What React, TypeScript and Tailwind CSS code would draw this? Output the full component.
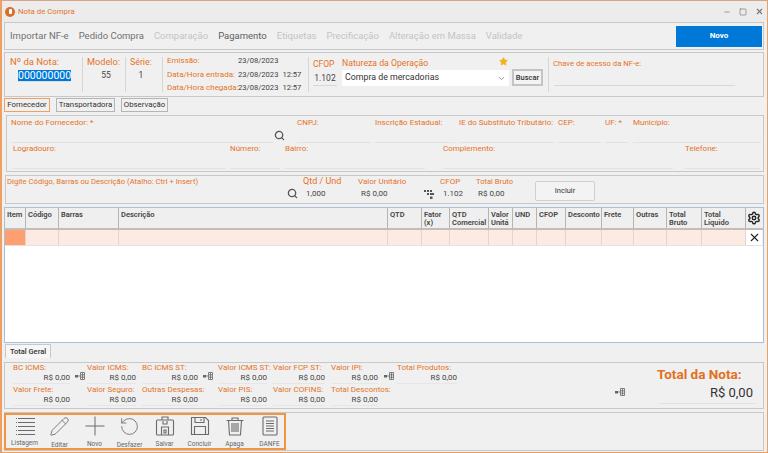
import React from "react";
import { Search, Star, X, Settings, ChevronDown, Minus, Square, Pencil, RotateCcw } from "lucide-react";

const L = "text-[#e67326]";

function Net({ className = "" }: { className?: string }) {
  return (
    <svg viewBox="0 0 10 10" className={"w-[10px] h-[10px] shrink-0 " + className} fill="none" stroke="#666" strokeWidth="1">
      <rect x="0" y="4" width="3" height="2.5" fill="#666" stroke="none" />
      <path d="M3 5h2M5.5 1.5h4v7h-4zM5.5 3.8h4M5.5 6.2h4M7.5 1.5v7" strokeWidth="0.8" />
    </svg>
  );
}

function Dots() {
  return (
    <svg viewBox="0 0 10 10" className="w-[10px] h-[10px] shrink-0" fill="#555">
      <rect x="0" y="1" width="2" height="2" /><rect x="3" y="1" width="2" height="2" /><rect x="6" y="1" width="2" height="2" />
      <rect x="6" y="4" width="2" height="2" /><rect x="8" y="4" width="2" height="2" /><rect x="3" y="4" width="2" height="2" />
      <rect x="6" y="7.5" width="2.5" height="2.5" />
    </svg>
  );
}

function VLine({ className = "" }: { className?: string }) {
  return <div className={"w-px bg-[#d6d6d6] shrink-0 " + className} />;
}

function Field({ label, w, className = "" }: { label: string; w: string; className?: string }) {
  return (
    <div className={w + " shrink-0 flex flex-col h-[26px] " + className}>
      <span className={L + " leading-[12px] whitespace-nowrap"}>{label}</span>
      <div className="mt-auto h-px bg-[#e2e2e2]" />
    </div>
  );
}

function Amount({ label, value = "R$ 0,00", w, ml }: { label: string; value?: string; w: string; ml: string }) {
  return (
    <div className={w + " " + ml + " shrink-0 flex flex-col h-[21px]"}>
      <span className={L + " leading-[10px] whitespace-nowrap"}>{label}</span>
      <span className="leading-[10px] text-right text-[#444] whitespace-nowrap">{value}</span>
      <div className="h-px bg-[#e6e6e6]" />
    </div>
  );
}

function Tool({ label, children }: { label: string; children: React.ReactNode }) {
  return (
    <div className="w-[35px] shrink-0 flex flex-col items-center">
      <div className="h-[22px] flex items-center justify-center text-[#6b6b6b]">{children}</div>
      <span className="mt-[4px] leading-[9px] text-[6.5px] text-[#666] whitespace-nowrap">{label}</span>
    </div>
  );
}

const headers: string[][] = [
  ["Item"], ["Código"], ["Barras"], ["Descrição"], ["QTD"], ["Fator", "(x)"], ["QTD", "Comercial"], ["Valor", "Unitá"],
  ["UND"], ["CFOP"], ["Desconto"], ["Frete"], ["Outras"], ["Total", "Bruto"], ["Total", "Líquido"],
];
const cols = "grid grid-cols-[21px_33px_60px_269px_34px_28px_39px_24px_24px_29px_36px_32px_33px_35px_44px_16px]";

export default function App() {
  return (
    <div
      className="w-[768px] h-[453px] overflow-hidden bg-[#f0f0f0] border border-l-2 border-[#ee9f62] border-t-[#d9a584] flex flex-col text-[8px] text-[#444]"
      style={{ fontFamily: 'Roboto, "Noto Sans", sans-serif' }}
    >
      {/* title */}
      <div className="h-[21px] shrink-0 flex items-center pl-[3px] pr-[3px] bg-[#ececec]">
        <div className="w-[10px] h-[10px] rounded-full bg-[#d9702a] flex items-center justify-center">
          <div className="w-[3px] h-[5px] bg-white rounded-[1px]" />
        </div>
        <span className={L + " ml-[3px] text-[7.8px]"}>Nota de Compra</span>
        <div className="ml-auto flex items-center gap-[8px] text-[#777]">
          <Minus size={8} />
          <Square size={8} />
          <X size={9} strokeWidth={3} />
        </div>
      </div>

      {/* tabs */}
      <div className="ml-[2px] mr-[3px] h-[28px] shrink-0 border border-[#c8c8c8] flex items-center pl-[5px] pr-[1px] text-[9.5px] gap-[10px] whitespace-nowrap">
        <span className="text-[#707070]">Importar NF-e</span>
        <span className="text-[#707070]">Pedido Compra</span>
        <span className="text-[#c4c4c4]">Comparação</span>
        <span className="text-[#606060]">Pagamento</span>
        <span className="text-[#c4c4c4]">Etiquetas</span>
        <span className="text-[#c4c4c4]">Precificação</span>
        <span className="text-[#c4c4c4]">Alteração em Massa</span>
        <span className="text-[#c4c4c4]">Validade</span>
        <button className="ml-auto w-[86px] h-[21px] bg-[#0078d7] text-white text-[8px] font-bold">Novo</button>
      </div>

      {/* header */}
      <div className="mt-[2px] ml-[2px] mr-[3px] h-[45px] shrink-0 border border-[#c8c8c8] flex pl-[5px]">
        <div className="w-[72px] shrink-0 pt-[2px]">
          <div className={L + " text-[9.5px] leading-[14px]"}>Nº da Nota:</div>
          <div className="mt-[1px] ml-[8px] w-[52px] border-b border-[#ddd] flex">
            <span className="bg-[#0078d7] text-white text-[10.5px] leading-[11px]">000000000</span>
          </div>
        </div>
        <VLine className="my-[4px]" />
        <div className="w-[42px] shrink-0 pl-[4px] pt-[2px]">
          <div className={L + " text-[9.2px] leading-[14px]"}>Modelo:</div>
          <div className="text-center text-[8.5px]">55</div>
        </div>
        <VLine className="my-[4px]" />
        <div className="w-[36px] shrink-0 pl-[4px] pt-[2px]">
          <div className={L + " text-[8.8px] leading-[14px]"}>Série:</div>
          <div className="w-[22px] text-center text-[8.5px]">1</div>
        </div>
        <VLine className="my-[4px]" />
        <div className="w-[145px] shrink-0 pl-[4px] pt-[1px] flex flex-col leading-[13.5px] whitespace-nowrap">
          <div className="flex"><span className={L + " w-[71px]"}>Emissão:</span><span className="text-[7.6px]">23/08/2023</span></div>
          <div className="flex"><span className={L + " w-[71px]"}>Data/Hora entrada:</span><span className="text-[7.6px]">23/08/2023</span><span className="ml-[4px] text-[7.6px]">12:57</span></div>
          <div className="flex"><span className={L + " w-[71px]"}>Data/Hora chegada:</span><span className="text-[7.6px]">23/08/2023</span><span className="ml-[4px] text-[7.6px]">12:57</span></div>
        </div>
        <VLine className="my-[4px]" />
        <div className="w-[33px] shrink-0 pl-[4px] pt-[5px]">
          <div className={L + " text-[8.5px] leading-[12px]"}>CFOP</div>
          <div className="mt-[1px] w-[24px] h-[15px] border-b border-[#d8d8d8] text-center text-[8.5px] leading-[14px]">1.102</div>
        </div>
        <div className="w-[172px] shrink-0 pt-[4px]">
          <div className="flex items-center h-[13px]">
            <span className={L + " text-[8.7px]"}>Natureza da Operação</span>
            <Star size={9} className="ml-auto mr-[6px] -mt-[5px] text-[#f2b21c]" fill="#f2b21c" />
          </div>
          <div className="h-[16px] w-[167px] bg-white flex items-center pl-[3px] pr-[3px] text-[8.8px] text-[#333]">
            Compra de mercadorias
            <ChevronDown size={9} className="ml-auto text-[#777]" />
          </div>
        </div>
        <button className="mt-[16px] w-[31px] h-[17px] border-2 border-[#c4c4c4] bg-[#f3f3f3] text-[7.5px] font-medium text-[#333] shrink-0 -ml-[2px]">Buscar</button>
        <VLine className="ml-[5px] my-[4px]" />
        <div className="ml-[4px] w-[182px] shrink-0 flex flex-col pt-[4px]">
          <span className={L + " text-[7.7px] leading-[14px]"}>Chave de acesso da NF-e:</span>
          <div className="mt-auto ml-[1px] mb-[10px] h-px bg-[#d8d8d8]" />
        </div>
      </div>

      {/* sub tabs */}
      <div className="mt-[1px] ml-[2px] h-[14px] shrink-0 flex text-[7.8px] text-[#333] whitespace-nowrap">
        <div className="w-[46px] border border-[#ee9f62] flex items-center justify-center">Fornecedor</div>
        <div className="ml-[6px] w-[59px] border border-[#b5b5b5] flex items-center justify-center">Transportadora</div>
        <div className="ml-[6px] w-[47px] border border-[#b5b5b5] flex items-center justify-center">Observação</div>
      </div>

      {/* fornecedor */}
      <div className="mt-[3px] ml-[4px] mr-[3px] h-[57px] shrink-0 border border-[#c8c8c8] pt-[1px] flex flex-col">
        <div className="flex pl-[4px]">
          <Field label="Nome do Fornecedor: *" w="w-[263px]" />
          <div className="w-[23px] shrink-0 flex items-end pb-[2px]"><Search size={11} className="text-[#555]" strokeWidth={2.8} /></div>
          <Field label="CNPJ:" w="w-[74px]" />
          <Field label="Inscrição Estadual:" w="w-[80px]" className="ml-[4px]" />
          <Field label="IE do Substituto Tributário:" w="w-[95px]" className="ml-[4px]" />
          <Field label="CEP:" w="w-[43px]" className="ml-[4px]" />
          <Field label="UF: *" w="w-[23px]" className="ml-[4px]" />
          <Field label="Município:" w="w-[128px]" className="ml-[5px]" />
        </div>
        <div className="flex pl-[6px]">
          <Field label="Logradouro:" w="w-[212px]" />
          <Field label="Número:" w="w-[50px]" className="ml-[5px]" />
          <Field label="Bairro:" w="w-[140px]" className="ml-[5px]" />
          <Field label="Complemento:" w="w-[230px]" className="ml-[18px]" />
          <Field label="Telefone:" w="w-[75px]" className="ml-[12px]" />
        </div>
      </div>

      {/* product */}
      <div className="mt-[3px] ml-[3px] mr-[3px] h-[29px] shrink-0 border border-[#c8c8c8] flex pl-[1px]">
        <div className={L + " w-[280px] shrink-0 text-[7.7px] leading-[11px] whitespace-nowrap"}>Digite Código, Barras ou Descrição (Atalho: Ctrl + Insert)</div>
        <div className="w-[16px] shrink-0 pt-[12px]"><Search size={11} className="text-[#555]" strokeWidth={2.8} /></div>
        <div className="w-[55px] shrink-0">
          <div className={L + " text-[9px] leading-[11px]"}>Qtd / Und</div>
          <div className="leading-[14px] pl-[3px]">1,000</div>
        </div>
        <div className="w-[66px] shrink-0">
          <div className={L + " leading-[11px] whitespace-nowrap"}>Valor Unitário</div>
          <div className="leading-[14px] pl-[3px]">R$ 0,00</div>
        </div>
        <div className="w-[16px] shrink-0 pt-[13px]"><Dots /></div>
        <div className="w-[36px] shrink-0">
          <div className={L + " leading-[11px]"}>CFOP</div>
          <div className="leading-[14px] pl-[3px]">1.102</div>
        </div>
        <div className="w-[59px] shrink-0">
          <div className={L + " text-[7.6px] leading-[11px] whitespace-nowrap"}>Total Bruto</div>
          <div className="leading-[14px] pl-[2px]">R$ 0,00</div>
        </div>
        <button className="mt-[5px] w-[60px] h-[20px] border border-[#cfcfcf] rounded-[2px] bg-[#f3f3f3] text-[7.5px] text-[#333]">Incluir</button>
      </div>

      {/* table */}
      <div className="mt-[3px] ml-[2px] mr-[3px] h-[136px] shrink-0 border border-[#a9c0d8] bg-white flex flex-col text-[7.5px] font-semibold text-[#444]">
        <div className={cols + " h-[22px] bg-[#efefef] border-b-2 border-[#c4bcb8] leading-[8px]"}>
          {headers.map((h, i) => (
            <div key={i} className="border-r border-[#b5b5b5] pl-[2px] pt-[3px] whitespace-nowrap overflow-hidden">
              {h.map((t) => <div key={t}>{t}</div>)}
            </div>
          ))}
          <div className="flex items-center justify-center"><Settings size={14} className="text-[#222]" strokeWidth={2.4} /></div>
        </div>
        <div className={cols + " h-[16px] bg-[#fdeae2] border-b border-[#e8e0dc]"}>
          {headers.map((h, i) => (
            <div key={i} className={"border-r border-[#e3d4cc] " + (i === 0 ? "bg-[#ff9e6e]" : "")} />
          ))}
          <div className="bg-white flex items-center justify-center"><X size={13} className="text-[#222]" /></div>
        </div>
      </div>

      {/* total tab */}
      <div className="mt-[1px] ml-[3px] h-[14px] w-[46px] shrink-0 border border-[#c8c8c8] border-b-0 bg-[#f6f6f6] flex items-center justify-center text-[7.5px] font-medium text-[#333] whitespace-nowrap">Total Geral</div>

      {/* totals */}
      <div className="mt-[4px] ml-[2px] mr-[3px] h-[47px] shrink-0 border border-[#c8c8c8] flex">
        <div className="flex flex-col gap-[1px] w-[470px] shrink-0">
          <div className="flex">
            <Amount label="BC ICMS:" w="w-[57px]" ml="ml-[8px]" />
            <div className="w-[17px] shrink-0 pl-[5px] pt-[8px]"><Net /></div>
            <Amount label="Valor ICMS:" w="w-[49px]" ml="ml-[0px]" />
            <Amount label="BC ICMS ST:" w="w-[56px]" ml="ml-[6px]" />
            <div className="w-[20px] shrink-0 pl-[5px] pt-[8px]"><Net /></div>
            <Amount label="Valor ICMS ST:" w="w-[49px]" ml="ml-[0px]" />
            <Amount label="Valor FCP ST:" w="w-[52px]" ml="ml-[6px]" />
            <Amount label="Valor IPI:" w="w-[47px]" ml="ml-[6px]" />
            <div className="w-[19px] shrink-0 pl-[6px] pt-[8px]"><Net /></div>
            <Amount label="Total Produtos:" w="w-[60px]" ml="ml-[0px]" />
          </div>
          <div className="flex">
            <Amount label="Valor Frete:" w="w-[57px]" ml="ml-[8px]" />
            <Amount label="Valor Seguro:" w="w-[49px]" ml="ml-[17px]" />
            <Amount label="Outras Despesas:" w="w-[56px]" ml="ml-[6px]" />
            <Amount label="Valor PIS:" w="w-[49px]" ml="ml-[20px]" />
            <Amount label="Valor COFINS:" w="w-[52px]" ml="ml-[6px]" />
            <Amount label="Total Descontos:" w="w-[47px]" ml="ml-[6px]" />
          </div>
        </div>
        <div className="ml-[140px] pt-[24px] w-[44px] shrink-0"><Net /></div>
        <div className="w-[97px] shrink-0 flex flex-col pt-[2px]">
          <span className="ml-[-2px] text-[13.5px] leading-[18px] font-bold text-[#e2701f] whitespace-nowrap">Total da Nota:</span>
          <span className="text-[13px] leading-[20px] text-[#333] text-right pr-[3px]">R$ 0,00</span>
          <div className="h-px bg-[#e2e2e2]" />
        </div>
      </div>

      {/* toolbar */}
      <div className="mt-[3px] ml-[2px] mr-[3px] h-[39px] shrink-0 border border-[#c8c8c8] border-l-0 flex">
        <div className="w-[282px] h-full shrink-0 border-2 border-[#f5943f] flex pl-[1px] pt-[1px]">
          <Tool label="Listagem">
            <svg viewBox="0 0 20 18" className="w-[20px] h-[18px]" stroke="#6b6b6b" fill="none" strokeWidth="1">
              <path d="M3 1.5h17M1 1.5h1M3 5.5h17M1 5.5h1M3 9.5h17M1 9.5h1M3 13.5h17M1 13.5h1M3 17.5h17M1 17.5h1" />
            </svg>
          </Tool>
          <Tool label="Editar"><Pencil size={21} strokeWidth={1} /></Tool>
          <Tool label="Novo">
            <svg viewBox="0 0 20 20" className="w-[20px] h-[20px]" stroke="#6b6b6b" fill="none" strokeWidth="1">
              <path d="M10 0.5v19M0.5 10h19" />
            </svg>
          </Tool>
          <Tool label="Desfazer"><RotateCcw size={21} strokeWidth={1} /></Tool>
          <Tool label="Salvar">
            <svg viewBox="0 0 20 20" className="w-[20px] h-[20px]" stroke="#6b6b6b" fill="none" strokeWidth="1.1">
              <rect x="1.5" y="4" width="17" height="15" rx="1" />
              <path d="M7 4V1h6v3M6.5 19v-8h7v8M8 5v3h4V5" />
              <path d="M9 14h2v3H9z" />
            </svg>
          </Tool>
          <Tool label="Concluir">
            <svg viewBox="0 0 20 20" className="w-[20px] h-[20px]" stroke="#6b6b6b" fill="none" strokeWidth="1.1">
              <path d="M1.5 1.5h14l3 3v14h-17z" />
              <path d="M5 1.5v5h9v-5M11 3v2M4.5 18.5v-8h11v8" />
            </svg>
          </Tool>
          <Tool label="Apaga">
            <svg viewBox="0 0 20 20" className="w-[20px] h-[20px]" stroke="#6b6b6b" fill="none" strokeWidth="1.1">
              <path d="M1.5 4.5h17M7 4.5V2h6v2.5M3.5 4.5l1 14.5h11l1-14.5" />
              <path d="M7 7v9M9 7v9M11 7v9M13 7v9" />
            </svg>
          </Tool>
          <Tool label="DANFE">
            <svg viewBox="0 0 20 20" className="w-[20px] h-[20px]" stroke="#6b6b6b" fill="none" strokeWidth="1.1">
              <rect x="3" y="1" width="14" height="18" rx="1" />
              <path d="M6 5h8M6 7.5h8M6 10h8M6 12.5h8M6 15h8" />
            </svg>
          </Tool>
        </div>
      </div>
    </div>
  );
}
